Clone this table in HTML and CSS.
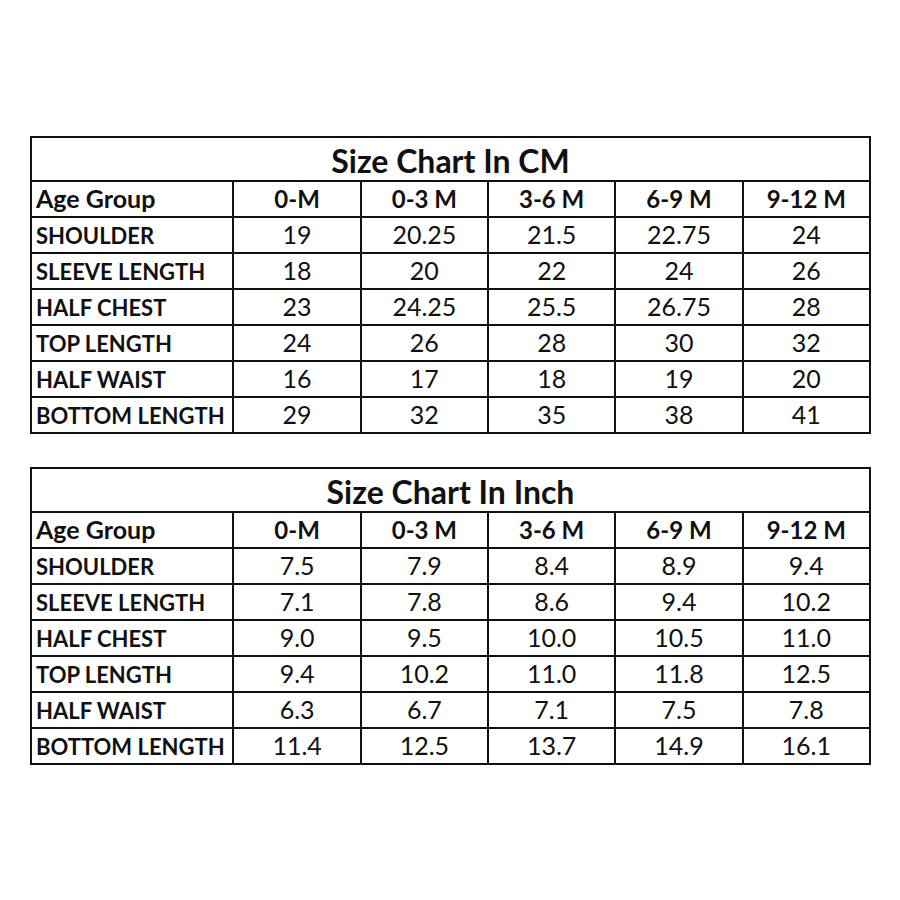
FILE: index.html
```html
<!DOCTYPE html>
<html>
<head>
<meta charset="utf-8">
<link rel="stylesheet" href="styles.css">
</head>
<body>
<div class="page">
  <table class="chart">
    <colgroup><col class="c-label"><col class="c-size"><col class="c-size"><col class="c-size"><col class="c-size"><col class="c-size"></colgroup>
    <tr class="title-row"><th colspan="6">Size Chart In CM</th></tr>
    <tr class="head-row"><th class="label">Age Group</th><th>0-M</th><th>0-3 M</th><th>3-6 M</th><th>6-9 M</th><th>9-12 M</th></tr>
    <tr><th class="label">SHOULDER</th><td>19</td><td>20.25</td><td>21.5</td><td>22.75</td><td>24</td></tr>
    <tr><th class="label">SLEEVE LENGTH</th><td>18</td><td>20</td><td>22</td><td>24</td><td>26</td></tr>
    <tr><th class="label">HALF CHEST</th><td>23</td><td>24.25</td><td>25.5</td><td>26.75</td><td>28</td></tr>
    <tr><th class="label">TOP LENGTH</th><td>24</td><td>26</td><td>28</td><td>30</td><td>32</td></tr>
    <tr><th class="label">HALF WAIST</th><td>16</td><td>17</td><td>18</td><td>19</td><td>20</td></tr>
    <tr><th class="label">BOTTOM LENGTH</th><td>29</td><td>32</td><td>35</td><td>38</td><td>41</td></tr>
  </table>
  <table class="chart">
    <colgroup><col class="c-label"><col class="c-size"><col class="c-size"><col class="c-size"><col class="c-size"><col class="c-size"></colgroup>
    <tr class="title-row"><th colspan="6">Size Chart In Inch</th></tr>
    <tr class="head-row"><th class="label">Age Group</th><th>0-M</th><th>0-3 M</th><th>3-6 M</th><th>6-9 M</th><th>9-12 M</th></tr>
    <tr><th class="label">SHOULDER</th><td>7.5</td><td>7.9</td><td>8.4</td><td>8.9</td><td>9.4</td></tr>
    <tr><th class="label">SLEEVE LENGTH</th><td>7.1</td><td>7.8</td><td>8.6</td><td>9.4</td><td>10.2</td></tr>
    <tr><th class="label">HALF CHEST</th><td>9.0</td><td>9.5</td><td>10.0</td><td>10.5</td><td>11.0</td></tr>
    <tr><th class="label">TOP LENGTH</th><td>9.4</td><td>10.2</td><td>11.0</td><td>11.8</td><td>12.5</td></tr>
    <tr><th class="label">HALF WAIST</th><td>6.3</td><td>6.7</td><td>7.1</td><td>7.5</td><td>7.8</td></tr>
    <tr><th class="label">BOTTOM LENGTH</th><td>11.4</td><td>12.5</td><td>13.7</td><td>14.9</td><td>16.1</td></tr>
  </table>
</div>
</body>
</html>
```
FILE: styles.css
```css
html, body {
  margin: 0;
  padding: 0;
  background: #ffffff;
}
.page {
  padding: 136px 0 0 30px;
  display: flex;
  flex-direction: column;
  gap: 33px;
  font-family: Lato, "Open Sans", sans-serif;
  color: #111;
}
.chart {
  border-collapse: collapse;
  table-layout: fixed;
  width: 841px;
  border: 2.5px solid #111;
}
.c-label { width: 202px; }
.c-size { width: 127px; }
.chart th, .chart td {
  border: 2px solid #111;
  height: 32px;
  padding: 2px 0 0 0;
  text-align: center;
  vertical-align: baseline;
  font-size: 25px;
  line-height: 28px;
  white-space: nowrap;
}
.chart th { font-weight: 700; font-size: 24px; }
.chart td { font-weight: 400; }
.chart th.label {
  text-align: left;
  padding-left: 4px;
  font-size: 22px;
}
.head-row th.label { font-size: 25px; }
.title-row th {
  height: 38px;
  font-size: 32px;
  line-height: 34px;
  padding-top: 4px;
  vertical-align: middle;
}
```
